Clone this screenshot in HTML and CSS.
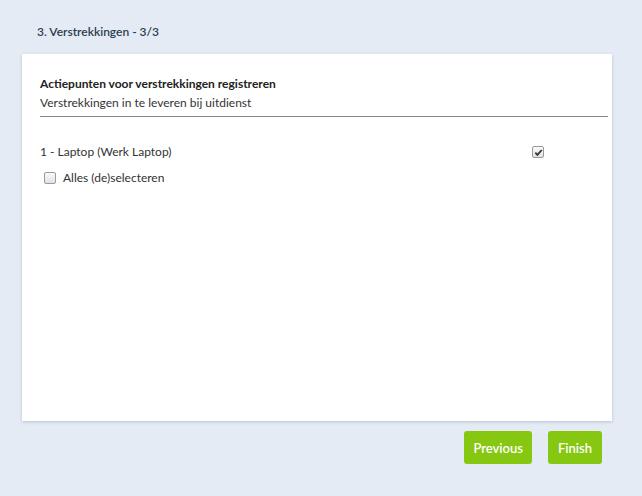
FILE: index.html
```html
<!DOCTYPE html>
<html>
<head>
<meta charset="utf-8">
<link rel="stylesheet" href="styles.css">
</head>
<body>
<div class="page">
  <h1 class="step-title">3. Verstrekkingen - 3/3</h1>
  <div class="card">
    <div class="section-head">
      <div class="section-title">Actiepunten voor verstrekkingen registreren</div>
      <div class="section-sub">Verstrekkingen in te leveren bij uitdienst</div>
    </div>
    <div class="item-row">
      <span class="item-label">1 - Laptop (Werk Laptop)</span>
      <span class="cb checked"><svg viewBox="0 0 10 10" width="9" height="9"><path d="M1.5 5.2 L3.8 7.6 L8.6 2.2" fill="none" stroke="#333" stroke-width="2"/></svg></span>
    </div>
    <div class="all-row">
      <span class="cb"></span>
      <span class="all-label">Alles (de)selecteren</span>
    </div>
  </div>
  <div class="actions">
    <button class="btn">Previous</button>
    <button class="btn btn-finish">Finish</button>
  </div>
</div>
</body>
</html>
```

FILE: styles.css
```css
html, body {
  margin: 0;
  padding: 0;
  background: #e4ebf4;
  font-family: "Source Sans Pro", Lato, "Open Sans", sans-serif;
  color: #222;
}
.page {
  padding: 22px 30px 0 22px;
}
.step-title {
  margin: 0 0 12px 15px;
  font-size: 12px;
  font-weight: 600;
  color: #2c3e50;
  line-height: 20px;
}
.card {
  background: #fff;
  height: 367px;
  box-shadow: 0 1px 3px rgba(80, 100, 130, 0.3);
  padding: 20px 4px 0 18px;
  box-sizing: border-box;
}
.section-head {
  border-bottom: 1px solid #888;
  padding-bottom: 4px;
}
.section-title {
  font-size: 12px;
  font-weight: 700;
  line-height: 20px;
  color: #222;
}
.section-sub {
  font-size: 12px;
  line-height: 18px;
  color: #333;
}
.item-row {
  display: flex;
  justify-content: space-between;
  align-items: center;
  margin-top: 26px;
  padding-right: 64px;
  font-size: 12px;
  color: #333;
  line-height: 18px;
}
.all-row {
  display: flex;
  align-items: center;
  margin-top: 8px;
  padding-left: 4px;
  font-size: 12px;
  color: #333;
  line-height: 18px;
}
.all-label {
  margin-left: 7px;
}
.cb {
  display: inline-flex;
  align-items: center;
  justify-content: center;
  width: 10px;
  height: 10px;
  border: 1px solid #9a9a9a;
  border-radius: 2px;
  background: linear-gradient(#fafafa, #e2e2e2);
}
.actions {
  display: flex;
  justify-content: flex-end;
  gap: 16px;
  margin-top: 10px;
  padding-right: 10px;
}
.btn {
  border: none;
  background: #86c712;
  color: #fff;
  font-family: inherit;
  font-size: 13px;
  font-weight: 600;
  border-radius: 3px;
  height: 33px;
  padding: 0 9px;
}
.btn-finish {
  padding: 0 10px;
}
```
